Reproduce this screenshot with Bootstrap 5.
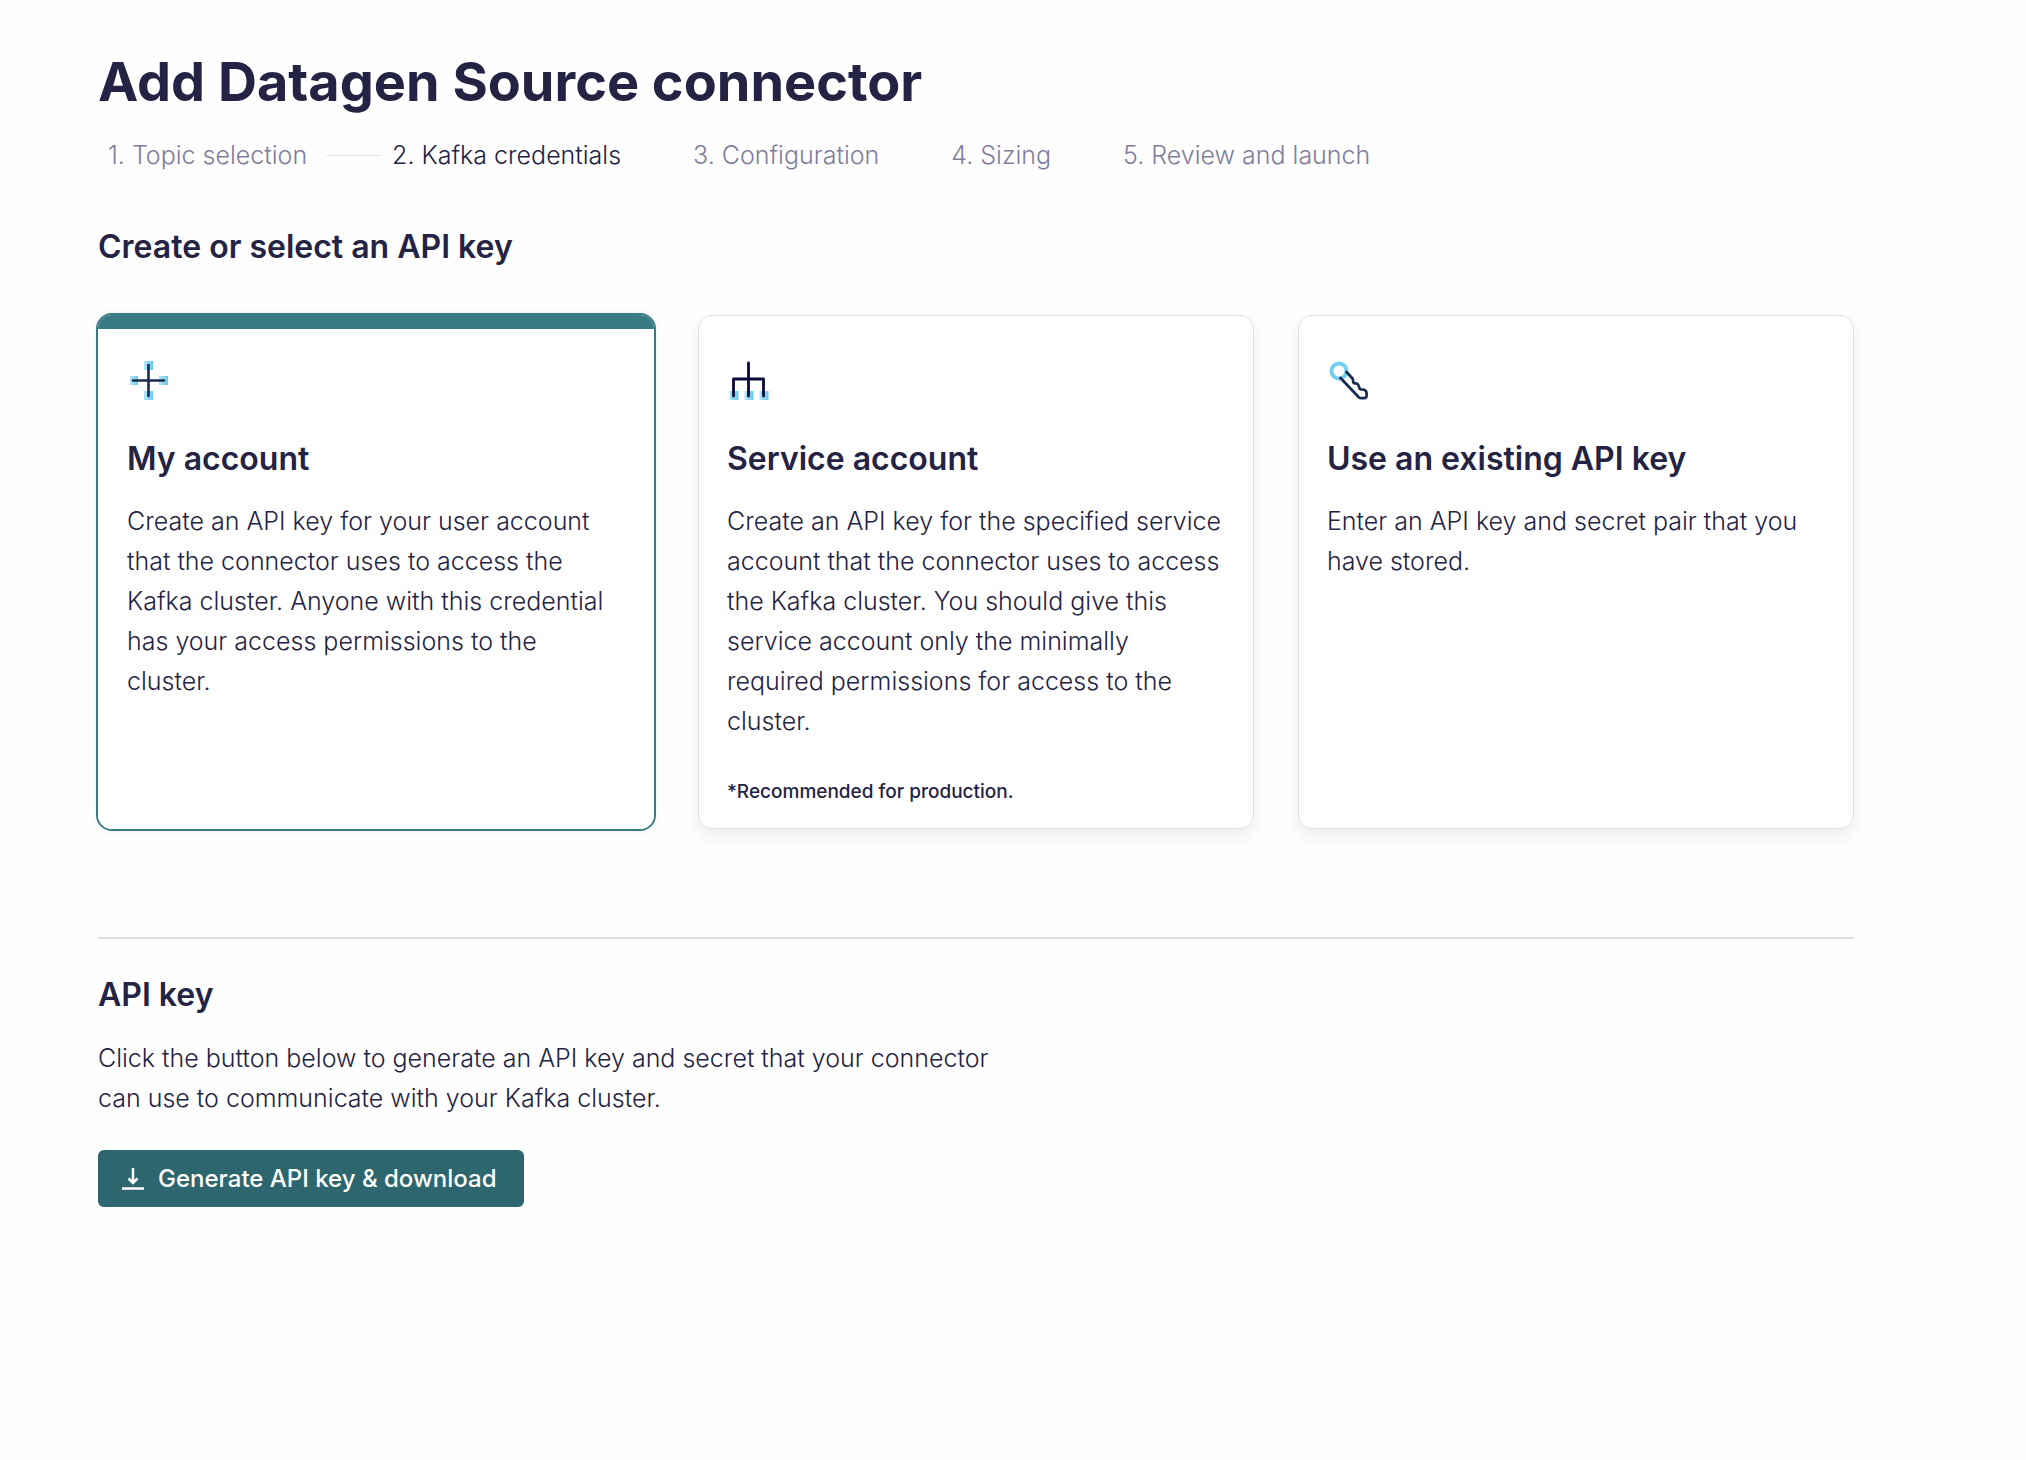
<!DOCTYPE html>
<html lang="en">
<head>
<meta charset="utf-8">
<meta name="viewport" content="width=device-width, initial-scale=1">
<title>Add Datagen Source connector</title>
<link href="https://cdn.jsdelivr.net/npm/bootstrap@5.3.0/dist/css/bootstrap.min.css" rel="stylesheet">
<style>
  :root { --ink: #242344; --muted-ink: #7f7d9c; --teal: #387b82; --teal-dark: #2d666e; --line: #dfdfe5; }
  body { font-family: Inter, "Liberation Sans", sans-serif; font-size: 25px; font-weight: 300; line-height: 40px; color: var(--ink); background: #fefefe; }
  .page { padding: 50px 172px 50px 98px; }
  .page-title { font-size: 54px; line-height: 64px; font-weight: 700; margin-bottom: 21px; }
  .section-title { font-size: 32px; line-height: 40px; font-weight: 600; }
  .steps { padding-left: 10px; margin-bottom: 52px; }
  .steps li { margin-right: 72px; }
  .steps .done { margin-right: 0; }
  .steps a { color: var(--muted-ink); text-decoration: none; }
  .steps .active a { color: var(--ink); }
  .step-line { width: 54px; height: 1px; background: var(--line); margin: 0 11px 0 20px; }
  .key-options { --bs-gutter-x: 44px; --bs-gutter-y: 44px; margin-bottom: 108px; }
  .key-option { min-height: 514px; padding: 44px 28px 20px; border: 1px solid var(--line); border-radius: 14px; background: #fff; box-shadow: 0 8px 20px rgba(0, 0, 0, .07); cursor: pointer; }
  .btn-check:checked + .key-option { border-color: transparent; background: linear-gradient(var(--teal) 14px, #fff 14px) border-box; box-shadow: 0 0 0 2px var(--teal), 0 0 6px rgba(56, 123, 130, .25); }
  .option-icon { width: 44px; height: 40px; margin-bottom: 39px; }
  .option-text { margin-top: 22px; }
  .option-note { font-size: 19px; line-height: 28px; font-weight: 500; margin-top: 37px; }
  .divider { height: 2px; border: 0; background: var(--line); opacity: 1; margin: 0 0 36px; }
  .intro { max-width: 920px; margin: 23px 0 32px; }
  .btn-generate { --bs-btn-color: #fff; --bs-btn-bg: var(--teal-dark); --bs-btn-hover-color: #fff; --bs-btn-hover-bg: var(--teal); --bs-btn-active-bg: var(--teal); --bs-btn-active-color: #fff; --bs-btn-border-width: 0; --bs-btn-border-radius: 6px; --bs-btn-font-size: 24px; --bs-btn-font-weight: 500; --bs-btn-line-height: 40px; padding: 9px 28px 8px 24px; gap: 14px; }
</style>
</head>
<body>
<main class="page">
  <h1 class="page-title">Add Datagen Source connector</h1>
  <nav aria-label="Progress">
    <ol class="steps list-unstyled d-flex flex-wrap">
      <li class="done d-flex align-items-center"><a href="#">1. Topic selection</a><span class="step-line"></span></li>
      <li class="active" aria-current="step"><a href="#">2. Kafka credentials</a></li>
      <li><a href="#">3. Configuration</a></li>
      <li><a href="#">4. Sizing</a></li>
      <li><a href="#">5. Review and launch</a></li>
    </ol>
  </nav>
  <h2 class="section-title mb-5">Create or select an API key</h2>
  <div class="key-options row row-cols-1 row-cols-lg-3">
    <div class="col d-flex">
      <input class="btn-check" type="radio" name="key-source" id="source-mine" checked>
      <label class="key-option d-flex flex-column w-100" for="source-mine">
        <svg class="option-icon" viewBox="0 0 44 40" aria-hidden="true">
          <defs><linearGradient id="sky"><stop offset="0" stop-color="#b5e6f6"/><stop offset="1" stop-color="#68c9ec"/></linearGradient></defs>
          <g fill="url(#sky)"><path d="M3 16h8v9H3z"/><path d="M32 16h9v9h-9z"/><path d="M17 1h9v9h-9z"/><path d="M17 31h9v9h-9z"/></g>
          <path d="M6 20.500h31M21.500 5v31" fill="none" stroke="#172a50" stroke-width="2.600" stroke-linecap="round"/>
        </svg>
        <span class="section-title">My account</span>
        <span class="option-text">Create an API key for your user account that the connector uses to access the Kafka cluster. Anyone with this credential has your access permissions to the cluster.</span>
      </label>
    </div>
    <div class="col d-flex">
      <input class="btn-check" type="radio" name="key-source" id="source-service">
      <label class="key-option d-flex flex-column w-100" for="source-service">
        <svg class="option-icon" viewBox="0 0 44 40" aria-hidden="true">
          <g fill="url(#sky)"><path d="M2.500 31h9v9h-9z"/><path d="M17.500 31h9v9h-9z"/><path d="M32.500 31h9v9h-9z"/></g>
          <path d="M21.500 3v33M6.500 36V19h30v17" fill="none" stroke="#080b3a" stroke-width="2.800" stroke-linecap="round" stroke-linejoin="round"/>
        </svg>
        <span class="section-title">Service account</span>
        <span class="option-text">Create an API key for the specified service account that the connector uses to access the Kafka cluster. You should give this service account only the minimally required permissions for access to the cluster.</span>
        <span class="option-note">*Recommended for production.</span>
      </label>
    </div>
    <div class="col d-flex">
      <input class="btn-check" type="radio" name="key-source" id="source-existing">
      <label class="key-option d-flex flex-column w-100" for="source-existing">
        <svg class="option-icon" viewBox="0 0 44 40" aria-hidden="true">
          <circle cx="12" cy="11" r="7.500" fill="none" stroke="#75cff0" stroke-width="4"/>
          <path d="M19.500 12l6 6.500c.8.900.200 2.500 1 4.200.8 1.200 2.700.300 4 1.300 1.800 1.500 1.200 3.600 2.500 5 1 .9 2.700.200 4.200.8 1.600.8 2.400 2 2.400 3.600v2.200c0 1.800-.8 2.600-2.500 2.600h-2.500c-1.200 0-2-.3-2.800-1L13.500 18" fill="none" stroke="#172a50" stroke-width="2.700" stroke-linecap="round" stroke-linejoin="round"/>
        </svg>
        <span class="section-title">Use an existing API key</span>
        <span class="option-text">Enter an API key and secret pair that you have stored.</span>
      </label>
    </div>
  </div>
  <hr class="divider">
  <section>
    <h2 class="section-title mb-0">API key</h2>
    <p class="intro">Click the button below to generate an API key and secret that your connector can use to communicate with your Kafka cluster.</p>
    <button type="button" class="btn btn-generate d-inline-flex align-items-center">
      <svg width="22" height="24" viewBox="0 0 22 24" fill="none" stroke="currentColor" stroke-width="2.500" aria-hidden="true"><path d="M11 1v15M6.500 11.500L11 16l4.500-4.500M0 21.500h22"/></svg>
      Generate API key &amp; download
    </button>
  </section>
</main>
<script src="https://cdn.jsdelivr.net/npm/bootstrap@5.3.0/dist/js/bootstrap.bundle.min.js"></script>
</body>
</html>
